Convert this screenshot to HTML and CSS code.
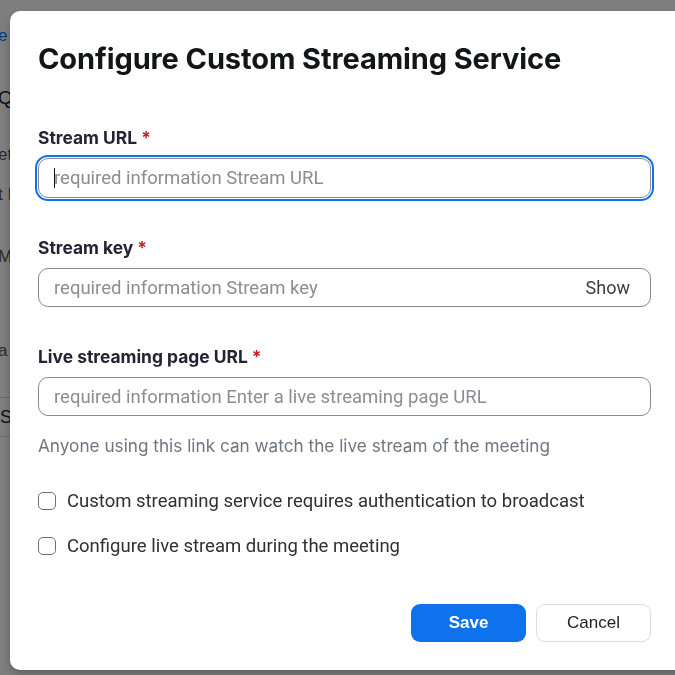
FILE: index.html
```html
<!DOCTYPE html>
<html lang="en">
<head>
<meta charset="utf-8">
<title>Configure Custom Streaming Service</title>
<link rel="stylesheet" href="styles.css">
</head>
<body>
<div class="page">
  <span class="frag frag-e">e <span class="frag-red">'</span></span>
  <span class="frag frag-qu">Qu</span>
  <span class="frag frag-et">et</span>
  <span class="frag frag-ti">t I</span>
  <span class="frag frag-m">M</span>
  <span class="frag frag-a">a</span>
  <div class="frag-row"><span>S</span></div>
</div>
<div class="overlay"></div>
<div class="modal" role="dialog" aria-labelledby="dlg-title">
  <h1 id="dlg-title" class="title">Configure Custom Streaming Service</h1>

  <div class="field">
    <label class="label">Stream URL <span class="req">*</span></label>
    <div class="input focused"><span class="caret"></span><span class="ph">required information Stream URL</span></div>
  </div>

  <div class="field">
    <label class="label">Stream key <span class="req">*</span></label>
    <div class="input"><span class="ph">required information Stream key</span><span class="show">Show</span></div>
  </div>

  <div class="field">
    <label class="label">Live streaming page URL <span class="req">*</span></label>
    <div class="input"><span class="ph">required information Enter a live streaming page URL</span></div>
    <p class="help">Anyone using this link can watch the live stream of the meeting</p>
  </div>

  <div class="checks">
    <label class="check"><span class="box"></span><span class="check-text">Custom streaming service requires authentication to broadcast</span></label>
    <label class="check"><span class="box"></span><span class="check-text">Configure live stream during the meeting</span></label>
  </div>

  <div class="actions">
    <button class="btn btn-primary">Save</button>
    <button class="btn btn-secondary">Cancel</button>
  </div>
</div>
</body>
</html>
```

FILE: styles.css
```css
* { box-sizing: border-box; }
html, body { margin: 0; padding: 0; }
body {
  width: 675px;
  height: 675px;
  overflow: hidden;
  background: #ffffff;
  font-family: Inter, "Liberation Sans", sans-serif;
}

.page {
  position: relative;
  width: 675px;
  height: 675px;
  font-family: "Liberation Sans", Arial, sans-serif;
  font-size: 17px;
  color: #222;
}
.frag { position: absolute; left: -2px; line-height: 20px; }
.frag-e { top: 26px; color: #0e72ed; }
.frag-red { color: #d02020; }
.frag-qu { top: 88px; font-size: 19px; }
.frag-et { top: 145px; color: #555; }
.frag-ti { top: 185px; color: #555; }
.frag-m { top: 247px; color: #555; }
.frag-a { top: 341px; color: #555; }
.frag-row {
  position: absolute;
  left: 0;
  top: 397px;
  width: 40px;
  height: 40px;
  border-top: 1px solid #d8d8d8;
  border-bottom: 1px solid #d8d8d8;
  font-size: 18px;
  line-height: 38px;
}

.overlay {
  position: fixed;
  inset: 0;
  background: rgba(0, 0, 0, 0.5);
}

.modal {
  position: fixed;
  left: 10px;
  top: 11px;
  width: 690px;
  height: 659px;
  background: #fff;
  border-radius: 10px;
  box-shadow: 0 4px 10px rgba(0, 0, 0, 0.25);
  padding: 32px 0 0 28px;
  display: flex;
  flex-direction: column;
}

.title {
  margin: 0;
  font-size: 29px;
  line-height: 32px;
  font-weight: 700;
  color: #131619;
  letter-spacing: -0.1px;
}

.field {
  width: 613px;
  display: flex;
  flex-direction: column;
}
.field + .field { margin-top: 40px; }
.title + .field { margin-top: 53px; }

.label {
  font-size: 17.4px;
  line-height: 20px;
  font-weight: 700;
  color: #232333;
  margin-bottom: 10px;
}
.req { color: #c41f1f; }

.input {
  height: 39px;
  border: 1px solid #8a8a8f;
  border-radius: 10px;
  display: flex;
  align-items: center;
  padding: 0 20px 0 15px;
  font-family: Roboto, "Liberation Sans", sans-serif;
  font-size: 18.5px;
}
.input.focused {
  height: 40px;
  outline: 2px solid #0e72ed;
  outline-offset: 1px;
}
.caret {
  width: 1px;
  height: 20px;
  background: #111;
  margin-right: -1px;
}
.ph { color: #8c8c94; flex: 1; }
.show { color: #3c3c44; font-size: 18px; }

.help {
  margin: 18px 0 0;
  font-size: 17.2px;
  line-height: 24px;
  color: #6e7680;
}

.checks {
  margin-top: 31px;
  display: flex;
  flex-direction: column;
  gap: 21px;
}
.check {
  display: flex;
  align-items: center;
  height: 24px;
  font-family: Roboto, "Liberation Sans", sans-serif;
  font-size: 18.5px;
  color: #2f2f35;
}
.box {
  width: 18px;
  height: 18px;
  border: 1px solid #6e6e74;
  border-radius: 5px;
  margin-right: 11px;
  background: #fff;
}

.actions {
  width: 613px;
  margin-top: 46px;
  display: flex;
  justify-content: flex-end;
  gap: 10px;
}
.btn {
  width: 115px;
  height: 38px;
  border-radius: 9px;
  font-family: "Liberation Sans", Arial, sans-serif;
  font-size: 17px;
  cursor: pointer;
}
.btn-primary {
  background: #0e72ed;
  border: none;
  color: #fff;
  font-weight: 700;
}
.btn-secondary {
  background: #fff;
  border: 1px solid #dcdce0;
  color: #222;
}
```
